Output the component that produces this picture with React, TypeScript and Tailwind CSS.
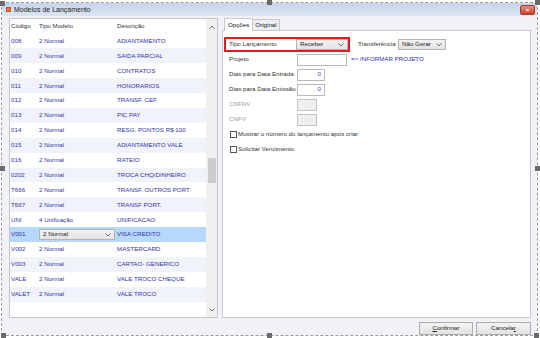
import React from 'react';

const rows = [
  ['008', '2 Normal', 'ADIANTAMENTO'],
  ['009', '2 Normal', 'SAIDA PARCIAL'],
  ['010', '2 Normal', 'CONTRATOS'],
  ['011', '2 Normal', 'HONORARIOS'],
  ['012', '2 Normal', 'TRANSF. CEF'],
  ['013', '2 Normal', 'PIC PAY'],
  ['014', '2 Normal', 'RESG. PONTOS R$ 100'],
  ['015', '2 Normal', 'ADIANTAMENTO VALE'],
  ['016', '2 Normal', 'RATEIO'],
  ['0202', '2 Normal', 'TROCA CHQ/DINHEIRO'],
  ['T666', '2 Normal', 'TRANSF. OUTROS PORT.'],
  ['T667', '2 Normal', 'TRANSF PORT.'],
  ['UNI', '4 Unificação', 'UNIFICACAO'],
  ['V001', '2 Normal', 'VISA CREDITO'],
  ['V002', '2 Normal', 'MASTERCARD'],
  ['V003', '2 Normal', 'CARTAO- GENERICO'],
  ['VALE', '2 Normal', 'VALE TROCO CHEQUE'],
  ['VALET', '2 Normal', 'VALE TROCO'],
];

const Chevron = ({ up = false }: { up?: boolean }) => (
  <svg width="6" height="4" viewBox="0 0 6 4" className={up ? 'rotate-180' : ''}>
    <polyline points="0.5,0.5 3,3 5.5,0.5" fill="none" stroke="#666" strokeWidth="0.9" />
  </svg>
);

const Combo = ({ value, w }: { value: string; w: string }) => (
  <div className={`${w} h-[11px] flex items-center justify-between pl-[3px] pr-[3px] border border-[#b4b4b4] bg-gradient-to-b from-[#f2f2f2] to-[#e3e3e3] text-[#222]`}>
    <span>{value}</span>
    <Chevron />
  </div>
);

const Handle = ({ pos }: { pos: string }) => <div className={`absolute w-[5px] h-[5px] bg-[#6b6b6b] ${pos}`} />;

const App = () => {
  return (
    <div
      className="relative w-[540px] h-[338px] bg-white overflow-hidden text-[6.2px] leading-none whitespace-nowrap"
      style={{ fontFamily: '"Liberation Sans", Arial, sans-serif' }}
    >
      <div className="ml-[1px] mt-[2px] w-[537px] h-[334px] border border-dashed border-[#9a9a9a] flex flex-col">
        {/* title bar */}
        <div className="h-[13px] flex items-center pl-[4px] bg-gradient-to-b from-[#c6d4e7] to-[#dce5f1]">
          <div className="w-[5px] h-[5px] bg-[#e8743a] border border-[#c55420]" />
          <span className="ml-[3px] text-[7px] text-[#1e1e1e]">Modelos de Lançamento</span>
          <div className="ml-auto mr-[2px] w-[15px] h-[10px] rounded-[2px] border border-[#9c3a30] bg-gradient-to-b from-[#e88a7c] to-[#c9412f] flex items-center justify-center text-white text-[6px] font-bold">
            ×
          </div>
        </div>

        {/* body */}
        <div className="flex-1 bg-[#f0f2f7] flex flex-col pl-[7px] pr-[6px] pt-[2px]">
          <div className="h-[300px] flex">
            {/* grid */}
            <div className="w-[209px] h-full border border-[#c6c8ce] bg-white flex">
              <div className="flex-1 flex flex-col">
                <div className="h-[14.5px] flex items-center text-[#333]">
                  <span className="w-[29px] pl-[1px]">Código</span>
                  <span className="w-[78px]">Tipo Modelo</span>
                  <span>Descrição</span>
                </div>
                {rows.map(([code, tipo, desc], i) => {
                  const sel = code === 'V001';
                  return (
                    <div
                      key={code}
                      className={`h-[14.9px] flex items-center text-[#3434a6] ${
                        sel ? 'bg-[#b6d8fa]' : i % 2 === 1 ? 'bg-[#f1f3fa]' : 'bg-white'
                      }`}
                    >
                      <span className="w-[29px] pl-[1px]">{code}</span>
                      <span className="w-[78px]">
                        {sel ? <Combo value={tipo} w="w-[76px]" /> : tipo}
                      </span>
                      <span>{desc}</span>
                    </div>
                  );
                })}
              </div>
              <div className="w-[11px] h-full bg-[#f0f0f0] flex flex-col items-center">
                <div className="h-[16px] flex items-center justify-center">
                  <Chevron up />
                </div>
                <div className="h-[123px]" />
                <div className="w-[8px] h-[25px] bg-[#cdcdcd]" />
                <div className="flex-1" />
                <div className="h-[14px] flex items-center justify-center">
                  <Chevron />
                </div>
              </div>
            </div>

            {/* right side */}
            <div className="ml-[4px] flex-1 flex flex-col">
              <div className="h-[12px] flex items-end pl-[2px] text-[#222]">
                <div className="relative z-10 h-[13px] -mb-px px-[3px] flex items-center border border-b-0 border-[#c6c8ce] bg-white">
                  Opções
                </div>
                <div className="h-[11px] px-[2px] flex items-center border border-l-0 border-b-0 border-[#c6c8ce] bg-[#eceef2]">
                  Original
                </div>
              </div>
              <div className="flex-1 border border-[#c6c8ce] bg-white pt-[6px] text-[#333]">
                <div className="h-[15px] flex items-center">
                  <div className="ml-[1px] w-[126px] h-[15px] border-2 border-[#e21b1b] flex items-center pl-[3px]">
                    <span className="w-[67px]">Tipo Lançamento</span>
                    <Combo value="Receber" w="w-[52px]" />
                  </div>
                  <span className="ml-[8px] w-[40px]">Transferência</span>
                  <Combo value="Não Gerar" w="w-[48px]" />
                </div>
                <div className="h-[15px] flex items-center pl-[6px]">
                  <span className="w-[68px]">Projeto</span>
                  <div className="w-[50px] h-[12px] border border-[#b9b9b9] bg-white" />
                  <span className="ml-[4px] text-[#3434b8]">=&gt; INFORMAR PROJETO</span>
                </div>
                {['Dias para Data Entrada', 'Dias para Data Emissão'].map((l) => (
                  <div key={l} className="h-[15px] flex items-center pl-[6px]">
                    <span className="w-[68px]">{l}</span>
                    <div className="w-[28px] h-[12px] border border-[#b9b9b9] bg-white flex items-center justify-end pr-[3px] text-[#5a3ec8]">
                      0
                    </div>
                  </div>
                ))}
                {['CNFNV', 'CNFV'].map((l) => (
                  <div key={l} className="h-[15px] flex items-center pl-[6px] text-[#9a9a9a]">
                    <span className="w-[68px]">{l}</span>
                    <div className="w-[20px] h-[12px] border border-[#c4c4c4] bg-[#efefef]" />
                  </div>
                ))}
                {['Mostrar o número do lançamento após criar', 'Solicitar Vencimento'].map((l) => (
                  <div key={l} className="h-[15px] flex items-center pl-[7px]">
                    <div className="w-[7px] h-[7px] border border-[#555] bg-white" />
                    <span className="ml-[1px]">{l}</span>
                  </div>
                ))}
              </div>
            </div>
          </div>

          {/* buttons */}
          <div className="mt-[4px] h-[13px] flex justify-end gap-[3px] text-[#222]">
            <div className="w-[54px] h-full border border-[#adadad] bg-gradient-to-b from-[#f4f4f4] to-[#e2e2e2] flex items-center justify-center">
              <span>
                <span className="underline">C</span>onfirmar
              </span>
            </div>
            <div className="w-[55px] h-full border border-[#adadad] bg-gradient-to-b from-[#f4f4f4] to-[#e2e2e2] flex items-center justify-center">
              <span>
                Cancela<span className="underline">r</span>
              </span>
            </div>
          </div>
        </div>
      </div>

      <Handle pos="left-0 top-[1px]" />
      <Handle pos="left-[267px] top-0" />
      <Handle pos="right-0 top-0" />
      <Handle pos="left-0 top-[166px]" />
      <Handle pos="right-0 top-[166px]" />
      <Handle pos="left-[1px] bottom-0" />
      <Handle pos="left-[267px] bottom-0" />
      <Handle pos="right-[1px] bottom-0" />
    </div>
  );
};

export default App;
